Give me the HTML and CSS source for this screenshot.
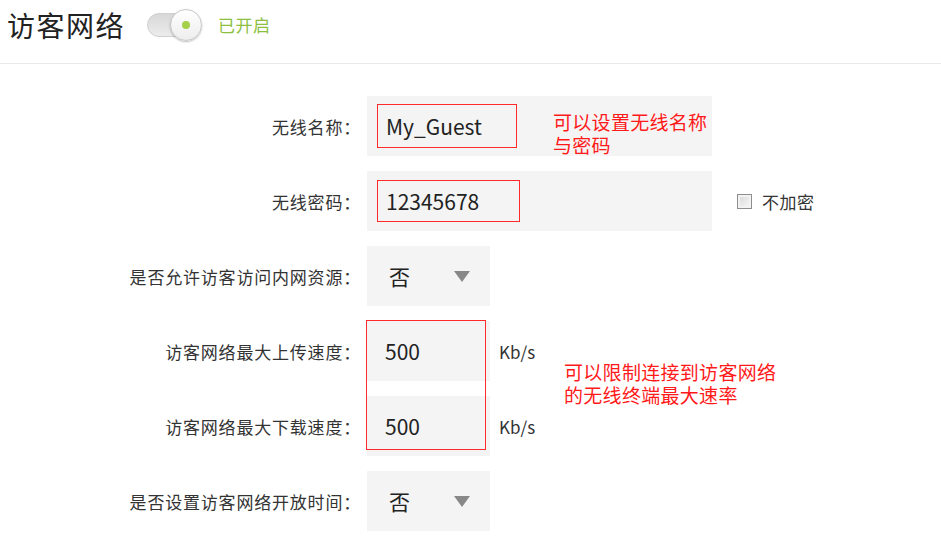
FILE: index.html
```html
<!DOCTYPE html>
<html lang="zh-CN">
<head>
<meta charset="utf-8">
<title>访客网络</title>
<link rel="stylesheet" href="styles.css">
</head>
<body>
<div class="page">
  <header class="header">
    <h1 class="title">访客网络</h1>
    <span class="toggle"><span class="knob"><span class="dot"></span></span></span>
    <span class="status">已开启</span>
  </header>

  <form class="form">
    <div class="row">
      <label class="label">无线名称<span class="colon">：</span></label>
      <div class="field wide">
        <span class="value boxed box1">My_Guest</span>
        <span class="note note1">可以设置无线名称<br>与密码</span>
      </div>
    </div>

    <div class="row">
      <label class="label">无线密码<span class="colon">：</span></label>
      <div class="field wide">
        <span class="value boxed box2">12345678</span>
      </div>
      <span class="check"><span class="checkbox"></span>不加密</span>
    </div>

    <div class="row">
      <label class="label">是否允许访客访问内网资源<span class="colon">：</span></label>
      <div class="field narrow select">
        <span class="value">否</span>
        <span class="arrow"></span>
      </div>
    </div>

    <div class="speed">
      <div class="row">
        <label class="label">访客网络最大上传速度<span class="colon">：</span></label>
        <div class="field narrow"><span class="value">500</span></div>
        <span class="unit">Kb/s</span>
      </div>
      <div class="row">
        <label class="label">访客网络最大下载速度<span class="colon">：</span></label>
        <div class="field narrow"><span class="value">500</span></div>
        <span class="unit">Kb/s</span>
      </div>
      <span class="speed-box"></span>
      <span class="note note2">可以限制连接到访客网络<br>的无线终端最大速率</span>
    </div>

    <div class="row">
      <label class="label">是否设置访客网络开放时间<span class="colon">：</span></label>
      <div class="field narrow select">
        <span class="value">否</span>
        <span class="arrow"></span>
      </div>
    </div>
  </form>
</div>
</body>
</html>
```

FILE: styles.css
```css
* { box-sizing: border-box; }

html, body {
  margin: 0;
  padding: 0;
  background: #ffffff;
}

body {
  font-family: "Noto Sans CJK SC", "Noto Sans", "Liberation Sans", sans-serif;
  color: #333333;
  width: 941px;
  height: 545px;
  overflow: hidden;
}

.header {
  display: flex;
  align-items: center;
  height: 64px;
  padding: 0 0 14px 7px;
  border-bottom: 1px solid #e8e8e8;
}

.title {
  margin: 0;
  font-size: 28px;
  font-weight: 400;
  color: #222222;
  line-height: 1;
  letter-spacing: 1.5px;
}

.toggle {
  position: relative;
  display: inline-block;
  width: 54px;
  height: 24px;
  margin-left: 22px;
  border-radius: 12px;
  background: linear-gradient(#d8d8d8, #ececec);
  border: 1px solid #d0d0d0;
}

.knob {
  position: absolute;
  right: -2px;
  top: -5px;
  width: 32px;
  height: 32px;
  border-radius: 50%;
  background: linear-gradient(#ffffff, #ededed);
  border: 1px solid #c8c8c8;
  box-shadow: 0 1px 2px rgba(0, 0, 0, 0.25);
  display: flex;
  align-items: center;
  justify-content: center;
}

.dot {
  width: 8px;
  height: 8px;
  border-radius: 50%;
  background: #a5d04a;
}

.status {
  margin-left: 17px;
  font-size: 17px;
  letter-spacing: 0.5px;
  color: #8cbf3f;
  line-height: 1;
}

.form {
  display: flex;
  flex-direction: column;
  gap: 15px;
  margin-top: 32px;
}

.speed {
  position: relative;
  display: flex;
  flex-direction: column;
  gap: 15px;
}

.row {
  display: flex;
  align-items: center;
  height: 60px;
}

.label {
  width: 367px;
  padding-right: 6px;
  text-align: right;
  font-size: 17px;
  color: #333333;
  letter-spacing: 0.8px;
  white-space: nowrap;
}

.colon {
  font-family: "Noto Sans CJK TC", "Noto Sans CJK SC", sans-serif;
}

.field {
  position: relative;
  height: 60px;
  background: #f4f4f4;
  display: flex;
  align-items: center;
}

.wide { width: 345px; }
.narrow { width: 123px; }

.value {
  font-size: 21px;
  color: #222222;
  padding-left: 18px;
  line-height: 1;
}

.boxed {
  display: flex;
  align-items: center;
  margin-left: 10px;
  padding-left: 8px;
  border: 1px solid #ff2a2a;
}

.box1 { width: 140px; height: 44px; }
.box2 { width: 143px; height: 42px; }

.select .value { padding-left: 22px; }

.arrow {
  margin-left: auto;
  margin-right: 20px;
  width: 0;
  height: 0;
  border-left: 8px solid transparent;
  border-right: 8px solid transparent;
  border-top: 11px solid #888888;
}

.note {
  position: absolute;
  font-size: 19px;
  letter-spacing: 0.3px;
  line-height: 23px;
  color: #ff1a1a;
  white-space: nowrap;
}

.note1 { left: 186px; top: 14px; }
.note2 { left: 564px; top: 39px; }

.speed-box {
  position: absolute;
  left: 366px;
  top: -1px;
  width: 120px;
  height: 130px;
  border: 1px solid #ff2a2a;
}

.unit {
  margin-left: 9px;
  font-size: 17px;
  color: #333333;
}

.check {
  display: flex;
  align-items: center;
  margin-left: 25px;
  font-size: 17px;
  letter-spacing: 0.5px;
  color: #333333;
}

.checkbox {
  width: 15px;
  height: 15px;
  margin-right: 10px;
  border: 1px solid #8e8e8e;
  background: linear-gradient(135deg, #d6d6d6, #f8f8f8);
  box-shadow: inset 0 0 0 2px #f2f2f2;
}
```
